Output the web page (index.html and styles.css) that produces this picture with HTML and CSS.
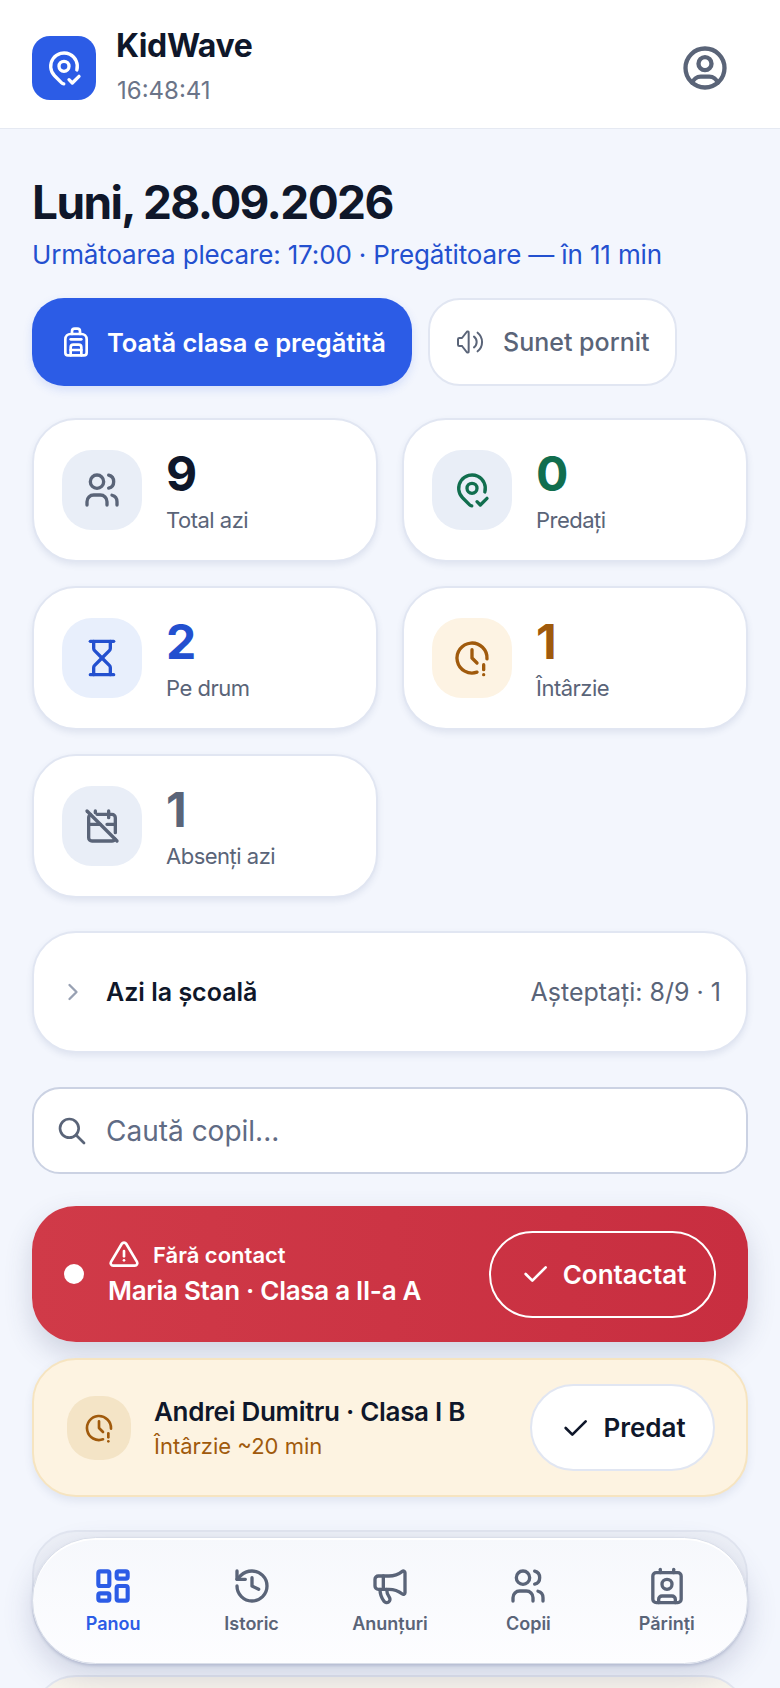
FILE: index.html
```html
<!DOCTYPE html>
<html lang="ro">
<head>
    <meta charset="UTF-8">
    <meta name="viewport" content="width=device-width, initial-scale=1" />
    <title>KidWave</title>
    <link rel="stylesheet" href="styles.css">
</head>
<body>

<div id="app">
    <header class="topbar">
        <div class="brand">
            <div class="logo">
                <svg class="icon" width="40" height="40" viewBox="0 0 24 24"><path d="M9 11a3 3 0 1 0 6 0a3 3 0 0 0 -6 0"/><path d="M11.87 21.48a1.992 1.992 0 0 1 -1.283 -.58l-4.244 -4.243a8 8 0 1 1 13.355 -3.474"/><path d="M15 19l2 2l4 -4"/></svg>
            </div>
            <div class="brand-text">
                <div class="brand-name">KidWave</div>
                <div class="clock">16:48:41</div>
            </div>
        </div>
        <svg class="icon account" width="52" height="52" viewBox="0 0 24 24"><path d="M12 12m-9 0a9 9 0 1 0 18 0a9 9 0 1 0 -18 0"/><path d="M12 10m-3 0a3 3 0 1 0 6 0a3 3 0 1 0 -6 0"/><path d="M6.168 18.849a4 4 0 0 1 3.832 -2.849h4a4 4 0 0 1 3.834 2.855"/></svg>
    </header>

    <main class="content">
        <h1 class="today">Luni, 28.09.2026</h1>
        <p class="next">Următoarea plecare: 17:00 · Pregătitoare — în 11 min</p>

        <div class="actions">
            <button class="btn-primary">
                <svg class="icon" width="32" height="32" viewBox="0 0 24 24"><path d="M4 10a4 4 0 0 1 4-4h8a4 4 0 0 1 4 4v10a2 2 0 0 1-2 2H6a2 2 0 0 1-2-2z"/><path d="M8 10h8"/><path d="M8 18h8"/><path d="M8 22v-6a2 2 0 0 1 2-2h4a2 2 0 0 1 2 2v6"/><path d="M9 6V4a2 2 0 0 1 2-2h2a2 2 0 0 1 2 2v2"/></svg>
                Toată clasa e pregătită
            </button>
            <button class="btn-sound">
                <svg class="icon thin" width="32" height="32" viewBox="0 0 24 24"><path d="M15 8a5 5 0 0 1 0 8"/><path d="M17.7 5a9 9 0 0 1 0 14"/><path d="M6 15h-2a1 1 0 0 1 -1 -1v-4a1 1 0 0 1 1 -1h2l3.5 -4.5a.8 .8 0 0 1 1.5 .5v14a.8 .8 0 0 1 -1.5 .5l-3.5 -4.5"/></svg>
                Sunet pornit
            </button>
        </div>

        <div class="stats">
            <div class="stat">
                <div class="tile tile-grey slate">
                    <svg class="icon" width="40" height="40" viewBox="0 0 24 24"><path d="M9 7m-4 0a4 4 0 1 0 8 0a4 4 0 1 0 -8 0"/><path d="M3 21v-2a4 4 0 0 1 4 -4h4a4 4 0 0 1 4 4v2"/><path d="M16 3.13a4 4 0 0 1 0 7.75"/><path d="M21 21v-2a4 4 0 0 0 -3 -3.85"/></svg>
                </div>
                <div class="stat-text"><div class="num ink">9</div><div class="label">Total azi</div></div>
            </div>
            <div class="stat">
                <div class="tile tile-grey green">
                    <svg class="icon" width="40" height="40" viewBox="0 0 24 24"><path d="M9 11a3 3 0 1 0 6 0a3 3 0 0 0 -6 0"/><path d="M11.87 21.48a1.992 1.992 0 0 1 -1.283 -.58l-4.244 -4.243a8 8 0 1 1 13.355 -3.474"/><path d="M15 19l2 2l4 -4"/></svg>
                </div>
                <div class="stat-text"><div class="num green">0</div><div class="label">Predați</div></div>
            </div>
            <div class="stat">
                <div class="tile tile-blue blue">
                    <svg class="icon" width="40" height="40" viewBox="0 0 24 24"><path d="M5 22h14"/><path d="M5 2h14"/><path d="M17 22v-4.172a2 2 0 0 0-.586-1.414L12 12l-4.414 4.414A2 2 0 0 0 7 17.828V22"/><path d="M7 2v4.172a2 2 0 0 0 .586 1.414L12 12l4.414-4.414A2 2 0 0 0 17 6.172V2"/></svg>
                </div>
                <div class="stat-text"><div class="num blue">2</div><div class="label">Pe drum</div></div>
            </div>
            <div class="stat">
                <div class="tile tile-amber amber">
                    <svg class="icon" width="40" height="40" viewBox="0 0 24 24"><path d="M20.986 12.502a9 9 0 1 0 -5.973 7.98"/><path d="M12 7v5l3 3"/><path d="M19 16v3"/><path d="M19 22v.01"/></svg>
                </div>
                <div class="stat-text"><div class="num amber">1</div><div class="label">Întârzie</div></div>
            </div>
            <div class="stat">
                <div class="tile tile-grey slate">
                    <svg class="icon" width="40" height="40" viewBox="0 0 24 24"><path d="M9 5h9a2 2 0 0 1 2 2v9m-.184 3.839a2 2 0 0 1 -1.816 1.161h-12a2 2 0 0 1 -2 -2v-12a2 2 0 0 1 1.158 -1.815"/><path d="M16 3v4"/><path d="M8 3v1"/><path d="M4 11h7m4 0h5"/><path d="M3 3l18 18"/></svg>
                </div>
                <div class="stat-text"><div class="num slate">1</div><div class="label">Absenți azi</div></div>
            </div>
        </div>

        <div class="school">
            <svg class="icon chevron" width="28" height="28" viewBox="0 0 24 24"><path d="M9 6l6 6l-6 6"/></svg>
            <span class="school-title">Azi la școală</span>
            <span class="school-count">Așteptați: 8/9 · 1</span>
        </div>

        <label class="search">
            <svg class="icon" width="32" height="32" viewBox="0 0 24 24"><path d="M10 10m-7 0a7 7 0 1 0 14 0a7 7 0 1 0 -14 0"/><path d="M21 21l-6 -6"/></svg>
            <input type="text" placeholder="Caută copil...">
        </label>

        <div class="alert">
            <span class="dot"></span>
            <div class="alert-text">
                <div class="alert-head">
                    <svg class="icon" width="32" height="32" viewBox="0 0 24 24"><path d="M12 9v4"/><path d="M10.363 3.591l-8.106 13.534a1.914 1.914 0 0 0 1.636 2.871h16.214a1.914 1.914 0 0 0 1.636 -2.87l-8.106 -13.536a1.914 1.914 0 0 0 -3.274 0z"/><path d="M12 16h.01"/></svg>
                    Fără contact
                </div>
                <div class="alert-name">Maria Stan · Clasa a II-a A</div>
            </div>
            <button class="btn-contact">
                <svg class="icon" width="32" height="32" viewBox="0 0 24 24"><path d="M5 12l5 5l10 -10"/></svg>
                Contactat
            </button>
        </div>

        <div class="late">
            <div class="late-tile amber">
                <svg class="icon" width="32" height="32" viewBox="0 0 24 24"><path d="M20.986 12.502a9 9 0 1 0 -5.973 7.98"/><path d="M12 7v5l3 3"/><path d="M19 16v3"/><path d="M19 22v.01"/></svg>
            </div>
            <div class="late-text">
                <div class="late-name">Andrei Dumitru · Clasa I B</div>
                <div class="late-sub">Întârzie ~20 min</div>
            </div>
            <button class="btn-handed">
                <svg class="icon" width="32" height="32" viewBox="0 0 24 24"><path d="M5 12l5 5l10 -10"/></svg>
                Predat
            </button>
        </div>

        <div class="row-card row-grey"></div>
        <div class="row-card row-warm"></div>
    </main>

    <nav class="tabbar">
        <div class="tab active">
            <svg class="icon bold" width="44" height="44" viewBox="0 0 24 24"><path d="M5 4h4a1 1 0 0 1 1 1v6a1 1 0 0 1 -1 1h-4a1 1 0 0 1 -1 -1v-6a1 1 0 0 1 1 -1"/><path d="M5 16h4a1 1 0 0 1 1 1v2a1 1 0 0 1 -1 1h-4a1 1 0 0 1 -1 -1v-2a1 1 0 0 1 1 -1"/><path d="M15 12h4a1 1 0 0 1 1 1v6a1 1 0 0 1 -1 1h-4a1 1 0 0 1 -1 -1v-6a1 1 0 0 1 1 -1"/><path d="M15 4h4a1 1 0 0 1 1 1v2a1 1 0 0 1 -1 1h-4a1 1 0 0 1 -1 -1v-2a1 1 0 0 1 1 -1"/></svg>
            Panou
        </div>
        <div class="tab">
            <svg class="icon" width="40" height="40" viewBox="0 0 24 24"><path d="M3 12a9 9 0 1 0 9-9 9.75 9.75 0 0 0-6.74 2.74L3 8"/><path d="M3 3v5h5"/><path d="M12 7v5l4 2"/></svg>
            Istoric
        </div>
        <div class="tab">
            <svg class="icon" width="40" height="40" viewBox="0 0 24 24"><path d="M11 6a13 13 0 0 0 8.4-2.8A1 1 0 0 1 21 4v12a1 1 0 0 1-1.6.8A13 13 0 0 0 11 14H5a2 2 0 0 1-2-2V8a2 2 0 0 1 2-2z"/><path d="M6 14a12 12 0 0 0 2.4 7.2 2 2 0 0 0 3.2-2.4A8 8 0 0 1 10 14"/><path d="M8 6v8"/></svg>
            Anunțuri
        </div>
        <div class="tab">
            <svg class="icon" width="40" height="40" viewBox="0 0 24 24"><path d="M9 7m-4 0a4 4 0 1 0 8 0a4 4 0 1 0 -8 0"/><path d="M3 21v-2a4 4 0 0 1 4 -4h4a4 4 0 0 1 4 4v2"/><path d="M16 3.13a4 4 0 0 1 0 7.75"/><path d="M21 21v-2a4 4 0 0 0 -3 -3.85"/></svg>
            Copii
        </div>
        <div class="tab">
            <svg class="icon" width="40" height="40" viewBox="0 0 24 24"><path d="M16 2v2"/><path d="M8 2v2"/><path d="M7 22v-2a2 2 0 0 1 2-2h6a2 2 0 0 1 2 2v2"/><circle cx="12" cy="11" r="3"/><rect x="3.5" y="4" width="17" height="18" rx="2"/></svg>
            Părinți
        </div>
    </nav>
</div>

</body>
</html>
```

FILE: styles.css
```css
* {
    box-sizing: border-box;
}

html, body {
    margin: 0;
    height: 1688px;
    overflow: hidden;
}

body {
    font-family: Inter, "Noto Sans", sans-serif;
    background-color: #f3f6fd;
    color: #0f172a;
}

button, input {
    font-family: inherit;
}

.icon {
    display: block;
    flex: none;
    fill: none;
    stroke: currentColor;
    stroke-width: 2;
    stroke-linecap: round;
    stroke-linejoin: round;
}

.icon.thin {
    stroke-width: 1.5;
}

.icon.bold {
    stroke-width: 2.25;
    margin: -2px 0;
}

.ink { color: #0f172a; }
.slate { color: #5a6478; }
.green { color: #116e4e; }
.blue { color: #2350cf; }
.amber { color: #a05a0c; }

#app {
    position: relative;
    height: 1688px;
    overflow: hidden;
}

.topbar {
    height: 129px;
    padding: 8px 49px 0 32px;
    display: flex;
    align-items: center;
    justify-content: space-between;
    background-color: #fff;
    border-bottom: 1px solid #e5e9f2;
}

.brand {
    display: flex;
    align-items: center;
    gap: 20px;
}

.logo {
    width: 64px;
    height: 64px;
    border-radius: 18px;
    background-color: #2c5ce6;
    color: #fff;
    display: flex;
    align-items: center;
    justify-content: center;
}

.brand-text {
    padding-bottom: 4px;
}

.brand-name {
    font-size: 32px;
    font-weight: 700;
    line-height: 40px;
    letter-spacing: -0.4px;
}

.clock {
    margin-top: 10px;
    margin-left: 1px;
    font-size: 24px;
    line-height: 30px;
    color: #6b7488;
}

.account {
    color: #5a6478;
}

.content {
    padding: 41px 32px 0;
}

.today {
    margin: 0;
    font-size: 46px;
    line-height: 64px;
    font-weight: 700;
    letter-spacing: -1.6px;
}

.next {
    margin: 4px 0 0;
    font-size: 26px;
    line-height: 34px;
    letter-spacing: -0.15px;
    color: #2350cf;
}

.actions {
    margin-top: 26px;
    display: flex;
    gap: 16px;
}

.btn-primary, .btn-sound {
    height: 88px;
    display: flex;
    align-items: center;
    font-weight: 600;
    white-space: nowrap;
    border-radius: 32px;
}

.btn-primary {
    width: 380px;
    padding: 0 0 0 28px;
    gap: 15px;
    border: 0;
    background-color: #2c5ce6;
    color: #fff;
    font-size: 25.5px;
    box-shadow: 0 4px 10px rgba(44, 92, 230, .15);
}

.btn-sound {
    width: 249px;
    padding: 0 24px;
    gap: 17px;
    background-color: #fff;
    border: 2px solid #e1e6f2;
    color: #5a6478;
    font-size: 25px;
    font-weight: 500;
}

.stats {
    margin-top: 32px;
    display: grid;
    grid-template-columns: 1fr 1fr;
    gap: 24px;
}

.stat {
    height: 144px;
    padding: 30px 28px;
    display: flex;
    align-items: center;
    gap: 24px;
    background-color: #fff;
    border: 2px solid #e1e6f2;
    border-radius: 44px;
    box-shadow: 0 3px 6px rgba(60, 80, 130, .1);
}

.stat-text {
    margin-top: 4px;
}

.tile {
    width: 80px;
    height: 80px;
    border-radius: 30px;
    display: flex;
    align-items: center;
    justify-content: center;
    flex: none;
}

.tile-grey { background-color: #e9eef7; }
.tile-blue { background-color: #e8effc; }
.tile-amber { background-color: #fdf3e3; }

.num {
    font-size: 48px;
    line-height: 50px;
    font-weight: 700;
}

.label {
    margin-top: 6px;
    font-size: 22px;
    line-height: 30px;
    letter-spacing: -0.5px;
    color: #5a6478;
}

.school {
    margin-top: 33px;
    height: 122px;
    padding: 0 25px 0 25px;
    display: flex;
    align-items: center;
    background-color: #fff;
    border: 2px solid #e1e6f2;
    border-radius: 44px;
    box-shadow: 0 3px 6px rgba(60, 80, 130, .1);
}

.chevron {
    color: #98a1b3;
}

.school-title {
    margin-left: 19px;
    font-size: 25px;
    font-weight: 600;
}

.school-count {
    margin-left: auto;
    font-size: 25px;
    color: #5a6478;
}

.search {
    margin-top: 34px;
    height: 87px;
    padding: 0 22px;
    display: flex;
    align-items: center;
    gap: 18px;
    background-color: #fff;
    border: 2px solid #cbd2e3;
    border-radius: 28px;
    color: #5a6478;
}

.search input {
    flex: 1;
    min-width: 0;
    border: 0;
    outline: 0;
    padding: 0;
    font-size: 28px;
    background: transparent;
}

.search input::placeholder {
    color: #5f6b84;
    opacity: 1;
}

.alert {
    margin-top: 32px;
    height: 136px;
    padding: 0 32px;
    display: flex;
    align-items: center;
    gap: 24px;
    border-radius: 44px;
    background: linear-gradient(90deg, #d03a48, #c82e40);
    color: #fff;
    box-shadow: 0 12px 28px rgba(60, 70, 110, .2);
}

.dot {
    width: 20px;
    height: 20px;
    flex: none;
    border-radius: 50%;
    background-color: #fff;
}

.alert-text {
    flex: 1;
    min-width: 0;
    padding-bottom: 2px;
}

.alert-head {
    display: flex;
    align-items: center;
    gap: 13px;
    font-size: 22px;
    font-weight: 600;
    line-height: 34px;
}

.alert-name {
    margin-top: 2px;
    font-size: 26px;
    font-weight: 600;
    line-height: 34px;
    letter-spacing: -0.3px;
}

.btn-contact, .btn-handed {
    height: 87px;
    display: flex;
    align-items: center;
    justify-content: center;
    gap: 12px;
    font-size: 26px;
    font-weight: 600;
    border-radius: 44px;
    flex: none;
}

.btn-contact {
    width: 227px;
    background: transparent;
    border: 2px solid #fff;
    color: #fff;
}

.late {
    margin-top: 16px;
    height: 139px;
    padding: 0 31px 0 33px;
    display: flex;
    align-items: center;
    background-color: #fdf3e1;
    border: 2px solid #f6e4c0;
    border-radius: 44px;
    box-shadow: 0 4px 8px rgba(60, 80, 130, .1);
}

.late-tile {
    width: 64px;
    height: 64px;
    flex: none;
    border-radius: 28px;
    background-color: #f4e4c6;
    display: flex;
    align-items: center;
    justify-content: center;
}

.late-text {
    flex: 1;
    min-width: 0;
    margin-left: 23px;
}

.late-name {
    font-size: 26px;
    font-weight: 600;
    line-height: 34px;
    letter-spacing: -0.3px;
}

.late-sub {
    margin-top: 2px;
    font-size: 22px;
    line-height: 30px;
    color: #a05a0c;
}

.btn-handed {
    width: 185px;
    background-color: #fff;
    border: 2px solid #e1e6f2;
    color: #0f172a;
}

.row-card {
    margin-top: 24px;
    height: 121px;
    border: 2px solid #e2e6f0;
    border-radius: 44px;
}

.row-grey {
    margin-top: 33px;
    background-color: #edf0f7;
}

.row-warm {
    background-color: #f8f4ec;
}

.tabbar {
    position: absolute;
    left: 32px;
    right: 32px;
    bottom: 24px;
    height: 127px;
    padding: 0 11px;
    display: grid;
    grid-template-columns: repeat(5, 1fr);
    align-items: center;
    background: linear-gradient(180deg, #f6f8fc, #fdfdff);
    border: 1px solid #d9dee9;
    border-radius: 64px;
    box-shadow: inset 0 2px 0 #fff, 0 2px 3px rgba(110, 120, 160, .3), 0 12px 30px rgba(60, 70, 120, .2);
}

.tab {
    display: flex;
    flex-direction: column;
    align-items: center;
    gap: 6px;
    font-size: 18px;
    font-weight: 600;
    line-height: 24px;
    color: #5a6478;
}

.tab.active {
    color: #2c5ce6;
}
```
